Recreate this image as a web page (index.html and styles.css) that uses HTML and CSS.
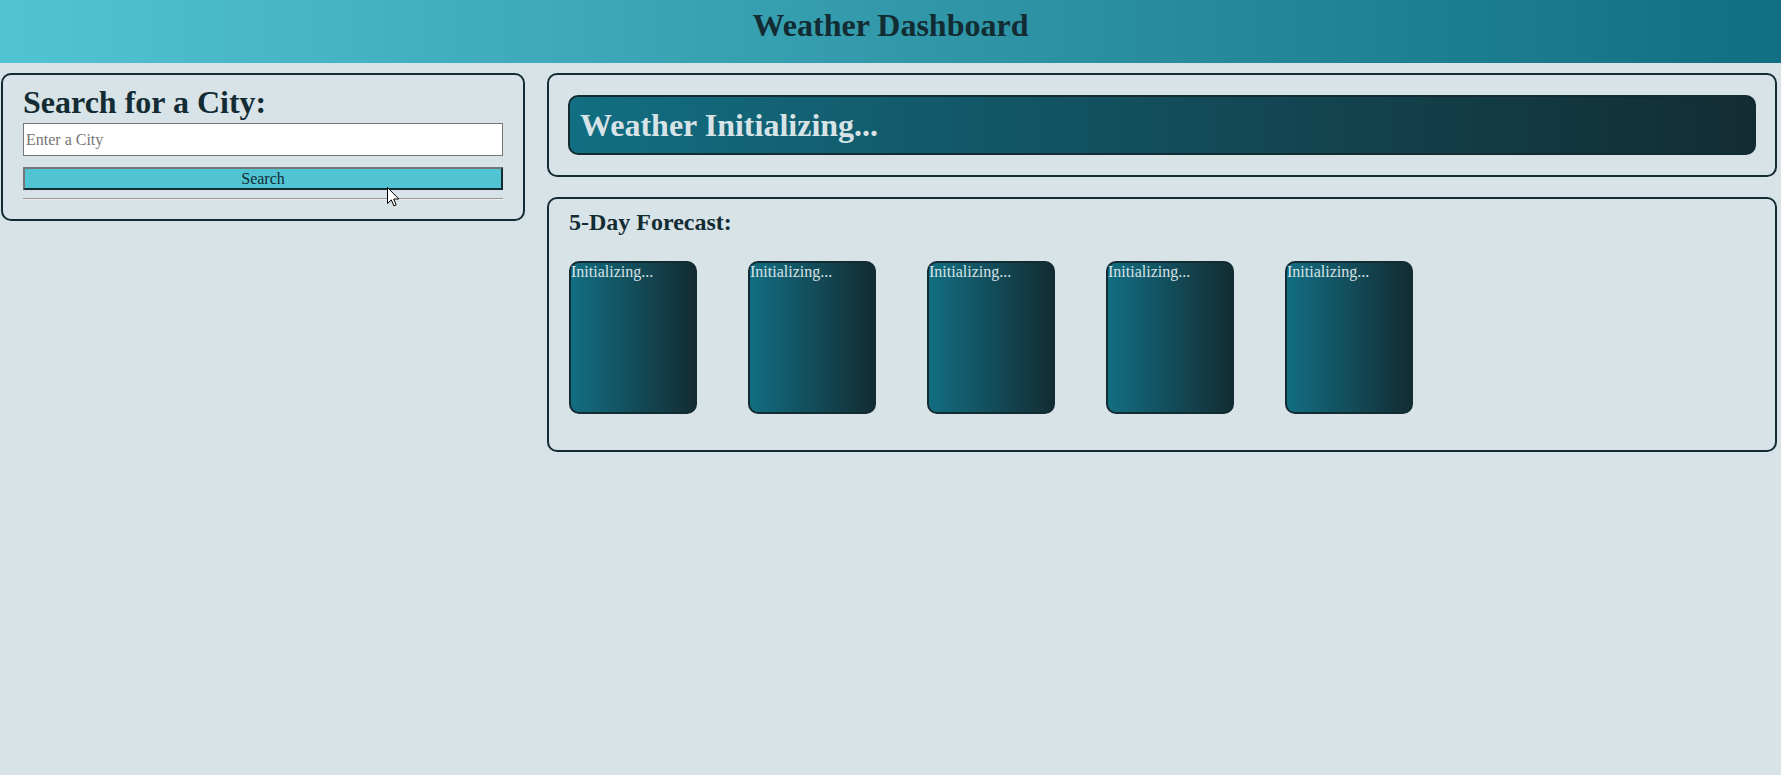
FILE: index.html
```html
<!DOCTYPE html>
<html lang="en">
<head>
<meta charset="utf-8">
<title>Weather Dashboard</title>
<link rel="stylesheet" href="styles.css">
</head>
<body>
<header class="top-bar">
  <h1 class="top-title">Weather Dashboard</h1>
</header>
<main class="layout">
  <aside class="panel search-panel">
    <h2 class="search-title">Search for a City:</h2>
    <input class="city-input" type="text" placeholder="Enter a City">
    <button class="search-btn" type="button">Search</button>
    <hr class="divider">
  </aside>
  <section class="content">
    <div class="panel current-panel">
      <h2 class="current-title">Weather Initializing...</h2>
    </div>
    <div class="panel forecast-panel">
      <h3 class="forecast-title">5-Day Forecast:</h3>
      <div class="cards">
        <div class="day-card">Initializing...</div>
        <div class="day-card">Initializing...</div>
        <div class="day-card">Initializing...</div>
        <div class="day-card">Initializing...</div>
        <div class="day-card">Initializing...</div>
      </div>
    </div>
  </section>
</main>
<svg class="cursor" width="13" height="20" viewBox="0 0 13 20" aria-hidden="true">
  <path d="M0.5 0.5 L0.5 16.5 L4.3 12.9 L6.9 18.9 L9.2 17.9 L6.7 12 L11.8 12 Z" fill="#ffffff" stroke="#000000" stroke-width="1" stroke-linejoin="round"/>
</svg>
</body>
</html>
```

FILE: styles.css
```css
* {
  box-sizing: border-box;
}

html, body {
  margin: 0;
  padding: 0;
}

body {
  background: #d8e3e7;
  color: #132c33;
  font-family: "Liberation Serif", "Times New Roman", serif;
  font-size: 16px;
  min-height: 775px;
  position: relative;
}

.top-bar {
  height: 63px;
  padding-top: 7px;
  background: linear-gradient(to right, #51c4d3, #126e82);
  text-align: center;
}

.top-title {
  margin: 0;
  font-size: 32px;
  font-weight: bold;
  color: #132c33;
}

.layout {
  display: flex;
  align-items: flex-start;
  gap: 22px;
  padding: 10px 4px 0 1px;
}

.panel {
  border: 2px solid #132c33;
  border-radius: 10px;
}

.search-panel {
  width: 524px;
  flex: none;
  display: flex;
  flex-direction: column;
  padding: 9px 20px 11px;
}

.search-title {
  margin: 0 0 3px;
  font-size: 32px;
  font-weight: bold;
  line-height: 36px;
}

.city-input {
  height: 33px;
  width: 100%;
  border: 1px solid #767676;
  padding: 1px 2px;
  background: #ffffff;
  font-family: "Liberation Serif", "Times New Roman", serif;
  font-size: 16px;
  color: #132c33;
  margin: 0;
}

.city-input::placeholder {
  color: #757575;
}

.search-btn {
  margin: 11px 0 0;
  height: 23px;
  width: 100%;
  padding: 0;
  background: #51c4d3;
  border-style: solid;
  border-width: 2px;
  border-color: #767676 #132c33 #132c33 #767676;
  font-family: "Liberation Serif", "Times New Roman", serif;
  font-size: 16px;
  line-height: 18px;
  color: #132c33;
}

.divider {
  margin: 8px 0;
  height: 2px;
  border: 0;
  border-top: 1px solid #9a9a9a;
  border-bottom: 1px solid #eeeeee;
}

.content {
  flex: 1;
  display: flex;
  flex-direction: column;
  gap: 20px;
  min-width: 0;
}

.current-panel {
  padding: 20px 19px;
}

.current-title {
  margin: 0;
  padding: 10px;
  border: 2px solid #132c33;
  border-radius: 10px;
  background: linear-gradient(to right, #126e82, #132c33);
  color: #d8e3e7;
  font-size: 32px;
  font-weight: bold;
  line-height: 36px;
}

.forecast-panel {
  padding: 10px 20px 36px;
}

.forecast-title {
  margin: 0 0 25px;
  font-size: 24px;
  font-weight: bold;
  line-height: 27px;
}

.cards {
  display: flex;
  gap: 51px;
}

.day-card {
  width: 128px;
  height: 153px;
  border: 2px solid #132c33;
  border-radius: 10px;
  background: linear-gradient(to right, #126e82, #132c33);
  color: #d8e3e7;
  font-size: 16px;
  line-height: 18px;
}

.cursor {
  position: absolute;
  left: 387px;
  top: 187px;
}
```
